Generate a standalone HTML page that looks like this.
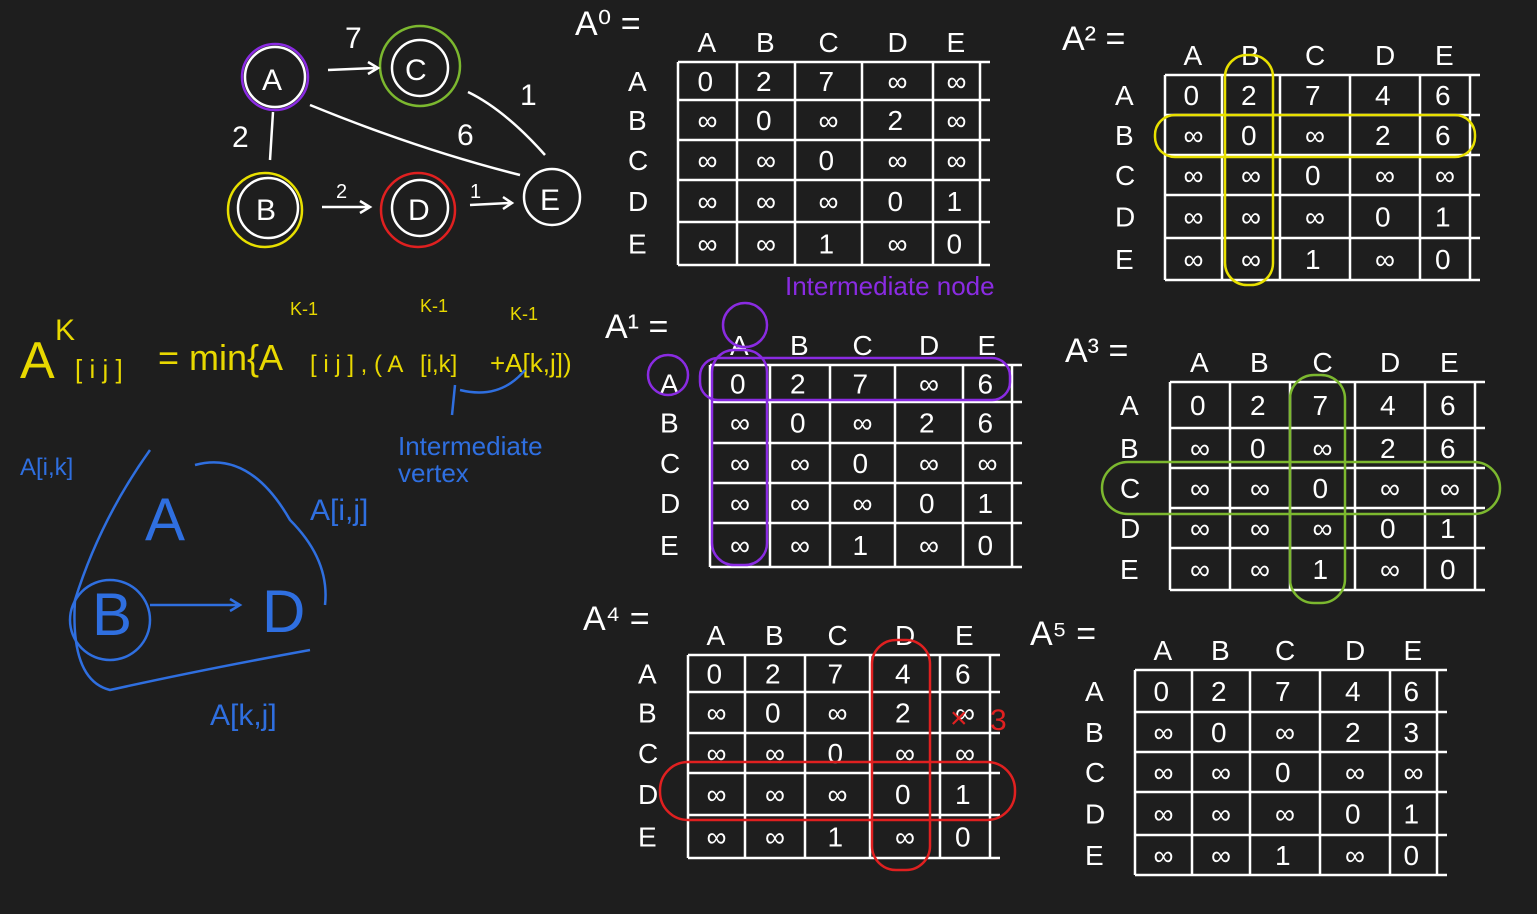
<!DOCTYPE html>
<html><head><meta charset="utf-8"><style>
html,body{margin:0;padding:0;background:#1e1e1e;}
svg{display:block}
text{font-family:"Liberation Sans",sans-serif;}
</style></head><body>
<svg id="s" width="1537" height="914" viewBox="0 0 1537 914" xmlns="http://www.w3.org/2000/svg">
<rect width="1537" height="914" fill="#1e1e1e"/>
<g fill="none" stroke-width="2.5">
<circle cx="275" cy="77" r="30" stroke="#fff"/><circle cx="275" cy="77" r="33" stroke="#8a2be2"/>
<circle cx="420" cy="68" r="28" stroke="#fff"/><circle cx="420" cy="66" r="40" stroke="#7cb82f"/>
<circle cx="268" cy="208" r="30" stroke="#fff"/><circle cx="265" cy="210" r="37" stroke="#e8e000"/>
<circle cx="420" cy="208" r="28" stroke="#fff"/><circle cx="418" cy="210" r="37" stroke="#e02020"/>
<circle cx="552" cy="197" r="28" stroke="#fff"/>
<path d="M328 70 L375 68 M368 62 L378 68 L368 74" stroke="#fff"/>
<path d="M273 112 L270 160" stroke="#fff"/>
<path d="M322 207 L368 207 M360 201 L370 207 L360 213" stroke="#fff"/>
<path d="M470 205 L510 203 M503 197 L512 203 L503 209" stroke="#fff"/>
<path d="M310 105 Q420 150 520 175" stroke="#fff"/>
<path d="M545 155 Q505 110 468 92" stroke="#fff"/>
</g>
<g fill="#fff" font-size="30">
<text x="345" y="48">7</text><text x="232" y="147">2</text><text x="336" y="198" font-size="20">2</text>
<text x="470" y="198" font-size="20">1</text><text x="457" y="145">6</text><text x="520" y="105">1</text>
<text x="262" y="90">A</text><text x="405" y="80">C</text><text x="256" y="220">B</text><text x="408" y="220">D</text><text x="540" y="210">E</text>
</g>
<g fill="#e8d800">
<text x="20" y="378" font-size="52">A</text><text x="55" y="340" font-size="30">K</text>
<text x="75" y="378" font-size="26">[ i j ]</text>
<text x="158" y="370" font-size="36">= min{A</text><text x="310" y="372" font-size="24">[ i j ] , ( A</text>
<text x="420" y="372" font-size="24">[i,k]</text><text x="490" y="372" font-size="26">+A[k,j])</text>
<text x="290" y="315" font-size="18">K-1</text><text x="420" y="312" font-size="18">K-1</text><text x="510" y="320" font-size="18">K-1</text>
</g>
<g fill="#2f6fe0" stroke="#2f6fe0">
<text x="20" y="475" font-size="24" stroke="none">A[i,k]</text>
<text x="310" y="520" font-size="30" stroke="none">A[i,j]</text>
<text x="210" y="725" font-size="30" stroke="none">A[k,j]</text>
<text x="398" y="455" font-size="26" stroke="none">Intermediate</text>
<text x="398" y="482" font-size="26" stroke="none">vertex</text>
<text x="145" y="540" font-size="60" stroke="none">A</text>
<text x="92" y="635" font-size="60" stroke="none">B</text>
<text x="262" y="632" font-size="60" stroke="none">D</text>
<g fill="none" stroke-width="2.5">
<circle cx="110" cy="620" r="40"/>
<path d="M150 605 L240 605 M230 599 L240 605 L230 611"/>
<path d="M150 450 Q100 520 75 600 Q70 680 110 690 Q200 670 310 650"/>
<path d="M195 465 Q250 450 290 520 Q330 560 325 605"/>
<path d="M455 385 L452 415 M460 390 Q500 400 525 370"/>
</g></g>
<g fill="#8a2be2"><text x="785" y="295" font-size="26">Intermediate node</text></g>
<g id="tables" stroke="#fff" stroke-width="2.5" fill="none"></g>
<g id="tt" fill="#fff" font-size="28"></g>
<g fill="none" stroke-width="2.5">
<rect x="700" y="358" width="310" height="42" rx="18" stroke="#8a2be2"/>
<rect x="712" y="350" width="55" height="215" rx="22" stroke="#8a2be2"/>
<circle cx="745" cy="325" r="22" stroke="#8a2be2"/><circle cx="668" cy="375" r="20" stroke="#8a2be2"/>
<rect x="1155" y="115" width="320" height="42" rx="20" stroke="#e8e000"/>
<rect x="1225" y="55" width="48" height="230" rx="22" stroke="#e8e000"/>
<rect x="1102" y="462" width="398" height="52" rx="26" stroke="#7cb82f"/>
<rect x="1290" y="375" width="55" height="228" rx="24" stroke="#7cb82f"/>
<rect x="660" y="762" width="355" height="58" rx="28" stroke="#e02020"/>
<rect x="872" y="640" width="58" height="230" rx="24" stroke="#e02020"/>
</g>
<text x="990" y="730" fill="#e02020" font-size="30">3</text>
<text x="950" y="728" fill="#e02020" font-size="30">×</text>
</svg>
<script>
var I="∞";
var base=[[0,2,7,I,I],[I,0,I,2,I],[I,I,0,I,I],[I,I,I,0,1],[I,I,1,I,0]];
function cp(){return base.map(r=>r.slice());}
var a1=cp();a1[0][4]=6;a1[1][4]=6;
var a2=cp();a2[0][3]=4;a2[0][4]=6;a2[1][4]=6;
var a4=cp();a4[0][3]=4;a4[0][4]=6;
var a5=cp();a5[0][3]=4;a5[0][4]=6;a5[1][4]=3;
var T=[
{n:"A⁰ =",lx:575,ly:35,c:[678,737,795,862,933,980],r:[62,100,140,180,222,265],d:base},
{n:"A² =",lx:1062,ly:50,c:[1165,1222,1280,1350,1420,1470],r:[75,115,155,195,238,280],d:a2},
{n:"A¹ =",lx:605,ly:338,c:[710,770,830,895,963,1012],r:[365,402,443,483,523,567],d:a1},
{n:"A³ =",lx:1065,ly:362,c:[1170,1230,1290,1355,1425,1475],r:[382,428,468,508,548,590],d:a2},
{n:"A⁴ =",lx:583,ly:630,c:[688,745,805,870,940,990],r:[655,692,733,773,815,858],d:a4},
{n:"A⁵ =",lx:1030,ly:645,c:[1135,1192,1250,1320,1390,1437],r:[670,712,752,792,835,875],d:a5}];
var g=document.getElementById("tables"),t=document.getElementById("tt"),ns="http://www.w3.org/2000/svg",h="",s="";
var L=["A","B","C","D","E"];
T.forEach(function(o){
 var c=o.c,r=o.r;
 c.forEach(x=>h+='<line x1="'+x+'" y1="'+r[0]+'" x2="'+x+'" y2="'+r[5]+'"/>');
 r.forEach(y=>h+='<line x1="'+c[0]+'" y1="'+y+'" x2="'+(c[5]+10)+'" y2="'+y+'"/>');
 s+='<text x="'+o.lx+'" y="'+o.ly+'" font-size="34">'+o.n+'</text>';
 for(var i=0;i<5;i++){
  s+='<text x="'+((c[i]+c[i+1])/2-10)+'" y="'+(r[0]-10)+'">'+L[i]+'</text>';
  s+='<text x="'+(c[0]-50)+'" y="'+((r[i]+r[i+1])/2+10)+'">'+L[i]+'</text>';
  for(var j=0;j<5;j++)s+='<text x="'+((c[j]+c[j+1])/2-10)+'" y="'+((r[i]+r[i+1])/2+10)+'">'+o.d[i][j]+'</text>';
 }
});
g.innerHTML=h;t.innerHTML=s;
</script>
</body></html>
